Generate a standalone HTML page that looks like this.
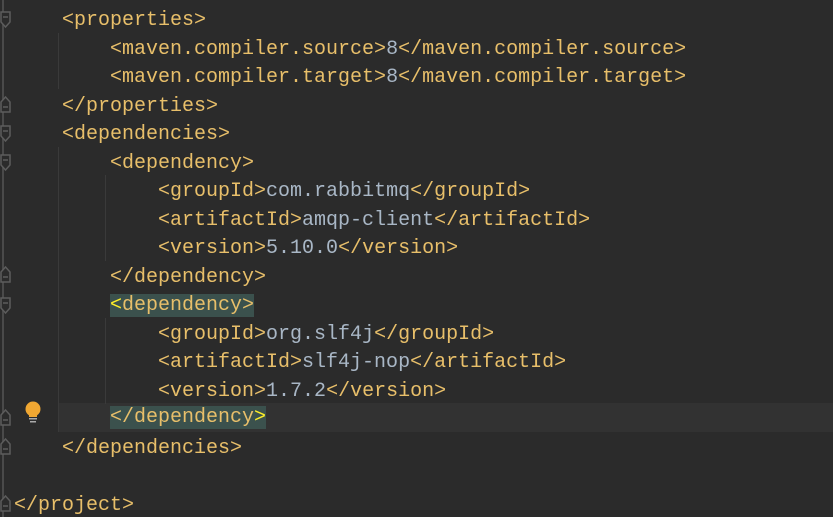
<!DOCTYPE html>
<html><head><meta charset="utf-8"><style>
html,body{margin:0;padding:0;background:#2b2b2b;width:833px;height:517px;overflow:hidden}
.ed{position:relative;width:833px;height:517px;font-family:"Liberation Mono",monospace;font-size:20px}
.l{position:absolute;left:14px;height:28.5px;line-height:28.5px;white-space:pre;color:#e8bf6a;margin-top:2px}
.v{color:#a9b7c6}
.cur{position:absolute;left:58px;right:0;top:403px;height:29px;background:#323232}
.hl{background:#3b514d}
.y{color:#ffef28}
.g{position:absolute;width:1px;background:#3a3a3a}
.f{position:absolute;left:0}
.fl{position:absolute;left:2px;top:0;width:1.5px;height:517px;background:#4a4a4a}
</style></head><body><div class="ed">
<div class="cur"></div>
<div class="fl"></div>
<svg class="f" style="top:11px" width="12" height="18"><path d="M1 1H10V11L5.5 16L1 11Z" fill="#2b2b2b" stroke="#5c5c5c" stroke-width="1.5"/><path d="M3 6H8" stroke="#5c5c5c" stroke-width="1.5"/></svg>
<svg class="f" style="top:95px" width="12" height="18"><path d="M1 17H10V7L5.5 2L1 7Z" fill="#2b2b2b" stroke="#5c5c5c" stroke-width="1.5"/><path d="M3 12H8" stroke="#5c5c5c" stroke-width="1.5"/></svg>
<svg class="f" style="top:125px" width="12" height="18"><path d="M1 1H10V11L5.5 16L1 11Z" fill="#2b2b2b" stroke="#5c5c5c" stroke-width="1.5"/><path d="M3 6H8" stroke="#5c5c5c" stroke-width="1.5"/></svg>
<svg class="f" style="top:154px" width="12" height="18"><path d="M1 1H10V11L5.5 16L1 11Z" fill="#2b2b2b" stroke="#5c5c5c" stroke-width="1.5"/><path d="M3 6H8" stroke="#5c5c5c" stroke-width="1.5"/></svg>
<svg class="f" style="top:265px" width="12" height="18"><path d="M1 17H10V7L5.5 2L1 7Z" fill="#2b2b2b" stroke="#5c5c5c" stroke-width="1.5"/><path d="M3 12H8" stroke="#5c5c5c" stroke-width="1.5"/></svg>
<svg class="f" style="top:297px" width="12" height="18"><path d="M1 1H10V11L5.5 16L1 11Z" fill="#2b2b2b" stroke="#5c5c5c" stroke-width="1.5"/><path d="M3 6H8" stroke="#5c5c5c" stroke-width="1.5"/></svg>
<svg class="f" style="top:408px" width="12" height="18"><path d="M1 17H10V7L5.5 2L1 7Z" fill="#2b2b2b" stroke="#5c5c5c" stroke-width="1.5"/><path d="M3 12H8" stroke="#5c5c5c" stroke-width="1.5"/></svg>
<svg class="f" style="top:437px" width="12" height="18"><path d="M1 17H10V7L5.5 2L1 7Z" fill="#2b2b2b" stroke="#5c5c5c" stroke-width="1.5"/><path d="M3 12H8" stroke="#5c5c5c" stroke-width="1.5"/></svg>
<svg class="f" style="top:494px" width="12" height="18"><path d="M1 17H10V7L5.5 2L1 7Z" fill="#2b2b2b" stroke="#5c5c5c" stroke-width="1.5"/><path d="M3 12H8" stroke="#5c5c5c" stroke-width="1.5"/></svg>
<div class="g" style="left:58px;top:33px;height:56px"></div>
<div class="g" style="left:58px;top:147px;height:285px"></div>
<div class="g" style="left:105px;top:175px;height:86px"></div>
<div class="g" style="left:105px;top:318px;height:86px"></div>
<svg style="position:absolute;left:24px;top:400px" width="18" height="26" viewBox="0 0 18 26"><circle cx="9" cy="9" r="7.5" fill="#f0a732"/><rect x="5" y="14" width="8" height="3" fill="#f0a732"/><rect x="5" y="18" width="8" height="1.5" fill="#aaa"/><rect x="6" y="21" width="6" height="1.5" fill="#aaa"/></svg>
<div class="l" style="top:5px">    &lt;properties&gt;</div>
<div class="l" style="top:33.5px">        &lt;maven.compiler.source&gt;<span class="v">8</span>&lt;/maven.compiler.source&gt;</div>
<div class="l" style="top:62px">        &lt;maven.compiler.target&gt;<span class="v">8</span>&lt;/maven.compiler.target&gt;</div>
<div class="l" style="top:90.5px">    &lt;/properties&gt;</div>
<div class="l" style="top:119px">    &lt;dependencies&gt;</div>
<div class="l" style="top:147.5px">        &lt;dependency&gt;</div>
<div class="l" style="top:176px">            &lt;groupId&gt;<span class="v">com.rabbitmq</span>&lt;/groupId&gt;</div>
<div class="l" style="top:204.5px">            &lt;artifactId&gt;<span class="v">amqp-client</span>&lt;/artifactId&gt;</div>
<div class="l" style="top:233px">            &lt;version&gt;<span class="v">5.10.0</span>&lt;/version&gt;</div>
<div class="l" style="top:261.5px">        &lt;/dependency&gt;</div>
<div class="l" style="top:290px">        <span class="hl"><span class="y">&lt;</span>dependency&gt;</span></div>
<div class="l" style="top:318.5px">            &lt;groupId&gt;<span class="v">org.slf4j</span>&lt;/groupId&gt;</div>
<div class="l" style="top:347px">            &lt;artifactId&gt;<span class="v">slf4j-nop</span>&lt;/artifactId&gt;</div>
<div class="l" style="top:375.5px">            &lt;version&gt;<span class="v">1.7.2</span>&lt;/version&gt;</div>
<div class="l" style="top:402px">        <span class="hl">&lt;/dependency<span class="y">&gt;</span></span></div>
<div class="l" style="top:432.5px">    &lt;/dependencies&gt;</div>
<div class="l" style="top:489.5px">&lt;/project&gt;</div>
</div></body></html>
